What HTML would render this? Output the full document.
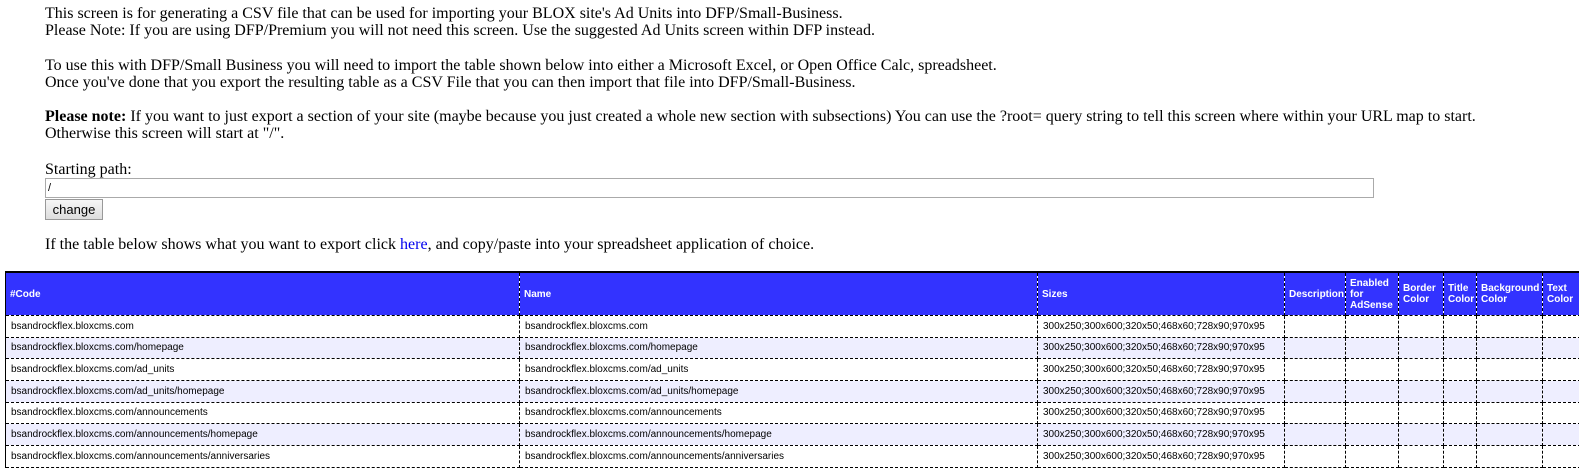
<!DOCTYPE html>
<html><head><meta charset="utf-8"><style>
body{margin:0;width:1579px;height:466px;overflow:hidden;background:#fff;font-family:"Liberation Serif",serif;font-size:16px;color:#000;position:relative}
.t{position:absolute;left:45px;line-height:17px;white-space:nowrap}
input{position:absolute;left:45px;top:178px;width:1329px;height:20px;box-sizing:border-box;border:1px solid #aaa;font:11px "Liberation Sans",sans-serif;padding:0 2px;margin:0}
button{position:absolute;left:45px;top:199px;width:58px;height:21px;box-sizing:border-box;border:1px solid #999;background:linear-gradient(#f6f6f6,#ddd);font:13px "Liberation Sans",sans-serif;padding:0;margin:0}
a{color:#00e}
.wrap{position:absolute;left:5px;top:271px;width:1700px}
table{border-collapse:collapse;table-layout:fixed;width:1590px;font:10px "Liberation Sans",sans-serif;border-top:2px solid #000;border-left:1px solid #000}
td,th{border:1px dashed #000;padding:0 0 0 5px;text-align:left;overflow:hidden;white-space:nowrap}
th{background:#3333ff;color:#fff;height:42px;font-weight:bold;line-height:11px;white-space:normal;padding-left:4px;border-top:none}
td{height:20.67px;padding-top:0;padding-bottom:0}
tr.a td{background:#eeeeff}
</style></head><body>
<div class="t" style="top:5px">This screen is for generating a CSV file that can be used for importing your BLOX site's Ad Units into DFP/Small-Business.<br>Please Note: If you are using DFP/Premium you will not need this screen. Use the suggested Ad Units screen within DFP instead.</div>
<div class="t" style="top:57px">To use this with DFP/Small Business you will need to import the table shown below into either a Microsoft Excel, or Open Office Calc, spreadsheet.<br>Once you've done that you export the resulting table as a CSV File that you can then import that file into DFP/Small-Business.</div>
<div class="t" style="top:108px"><b>Please note:</b> If you want to just export a section of your site (maybe because you just created a whole new section with subsections) You can use the ?root= query string to tell this screen where within your URL map to start.<br>Otherwise this screen will start at "/".</div>
<div class="t" style="top:161px">Starting path:</div>
<input value="/">
<button>change</button>
<div class="t" style="top:236px">If the table below shows what you want to export click <a>here</a>, and copy/paste into your spreadsheet application of choice.</div>
<div class="wrap">
<table>
<colgroup><col style="width:514px"><col style="width:518px"><col style="width:247px"><col style="width:61px"><col style="width:53px"><col style="width:45px"><col style="width:33px"><col style="width:66px"><col style="width:53px"></colgroup>
<tr><th>#Code</th><th>Name</th><th>Sizes</th><th>Description</th><th>Enabled for AdSense</th><th>Border Color</th><th>Title Color</th><th>Background Color</th><th>Text Color</th></tr>
<tr><td>bsandrockflex.bloxcms.com</td><td>bsandrockflex.bloxcms.com</td><td>300x250;300x600;320x50;468x60;728x90;970x95</td><td></td><td></td><td></td><td></td><td></td><td></td></tr>
<tr class="a"><td>bsandrockflex.bloxcms.com/homepage</td><td>bsandrockflex.bloxcms.com/homepage</td><td>300x250;300x600;320x50;468x60;728x90;970x95</td><td></td><td></td><td></td><td></td><td></td><td></td></tr>
<tr><td>bsandrockflex.bloxcms.com/ad_units</td><td>bsandrockflex.bloxcms.com/ad_units</td><td>300x250;300x600;320x50;468x60;728x90;970x95</td><td></td><td></td><td></td><td></td><td></td><td></td></tr>
<tr class="a"><td>bsandrockflex.bloxcms.com/ad_units/homepage</td><td>bsandrockflex.bloxcms.com/ad_units/homepage</td><td>300x250;300x600;320x50;468x60;728x90;970x95</td><td></td><td></td><td></td><td></td><td></td><td></td></tr>
<tr><td>bsandrockflex.bloxcms.com/announcements</td><td>bsandrockflex.bloxcms.com/announcements</td><td>300x250;300x600;320x50;468x60;728x90;970x95</td><td></td><td></td><td></td><td></td><td></td><td></td></tr>
<tr class="a"><td>bsandrockflex.bloxcms.com/announcements/homepage</td><td>bsandrockflex.bloxcms.com/announcements/homepage</td><td>300x250;300x600;320x50;468x60;728x90;970x95</td><td></td><td></td><td></td><td></td><td></td><td></td></tr>
<tr><td>bsandrockflex.bloxcms.com/announcements/anniversaries</td><td>bsandrockflex.bloxcms.com/announcements/anniversaries</td><td>300x250;300x600;320x50;468x60;728x90;970x95</td><td></td><td></td><td></td><td></td><td></td><td></td></tr>
</table>
</div>
</body></html>
